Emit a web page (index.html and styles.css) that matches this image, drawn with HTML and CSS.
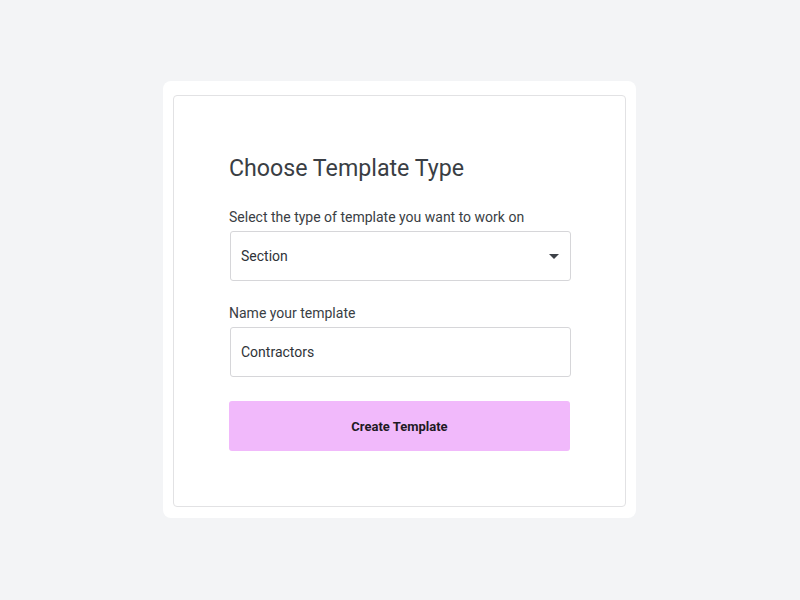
FILE: index.html
```html
<!DOCTYPE html>
<html lang="en">
<head>
<meta charset="utf-8">
<title>Choose Template Type</title>
<link rel="stylesheet" href="styles.css">
</head>
<body>
<div class="card">
  <div class="panel">
    <h1 class="title">Choose Template Type</h1>
    <label class="label">Select the type of template you want to work on</label>
    <div class="field select">
      <span>Section</span>
      <svg class="caret" width="10" height="5" viewBox="0 0 10 5"><path d="M0 0H10L5 5Z" fill="#3d4148"/></svg>
    </div>
    <label class="label second">Name your template</label>
    <div class="field">
      <span>Contractors</span>
    </div>
    <button class="btn">Create Template</button>
  </div>
</div>
</body>
</html>
```

FILE: styles.css
```css
* { box-sizing: border-box; }
html, body { margin: 0; padding: 0; }
body {
  background: #f3f4f6;
  font-family: Roboto, "Liberation Sans", sans-serif;
  color: #3a3e44;
  min-height: 100vh;
  display: flex;
  align-items: center;
  justify-content: center;
}
.card {
  width: 473px;
  background: #fff;
  border-radius: 8px;
  padding: 14px 10px 11px;
  margin: 0 1px 1px 0;
}
.panel {
  border: 1px solid #e2e2e4;
  border-radius: 4px;
  padding: 56px 55px 55px;
  display: flex;
  flex-direction: column;
}
.title {
  margin: 0 0 23px;
  font-size: 23.2px;
  line-height: 32px;
  font-weight: 400;
  color: #3a3e44;
}
.label {
  font-size: 14px;
  line-height: 20px;
  margin-bottom: 4px;
  color: #3a3e44;
}
.label.second { margin-top: 22px; }
.field {
  height: 50px;
  border: 1px solid #d6d6d9;
  border-radius: 3px;
  padding: 0 11px 0 10px;
  display: flex;
  align-items: center;
  justify-content: space-between;
  font-size: 14px;
  color: #2f3338;
  margin: 0 -1px 0 1px;
}
.btn {
  margin-top: 24px;
  height: 50px;
  border: none;
  border-radius: 3px;
  background: #f1b9fb;
  font-family: Roboto, "Liberation Sans", sans-serif;
  font-size: 13px;
  font-weight: 700;
  color: #1f1a24;
}
```
